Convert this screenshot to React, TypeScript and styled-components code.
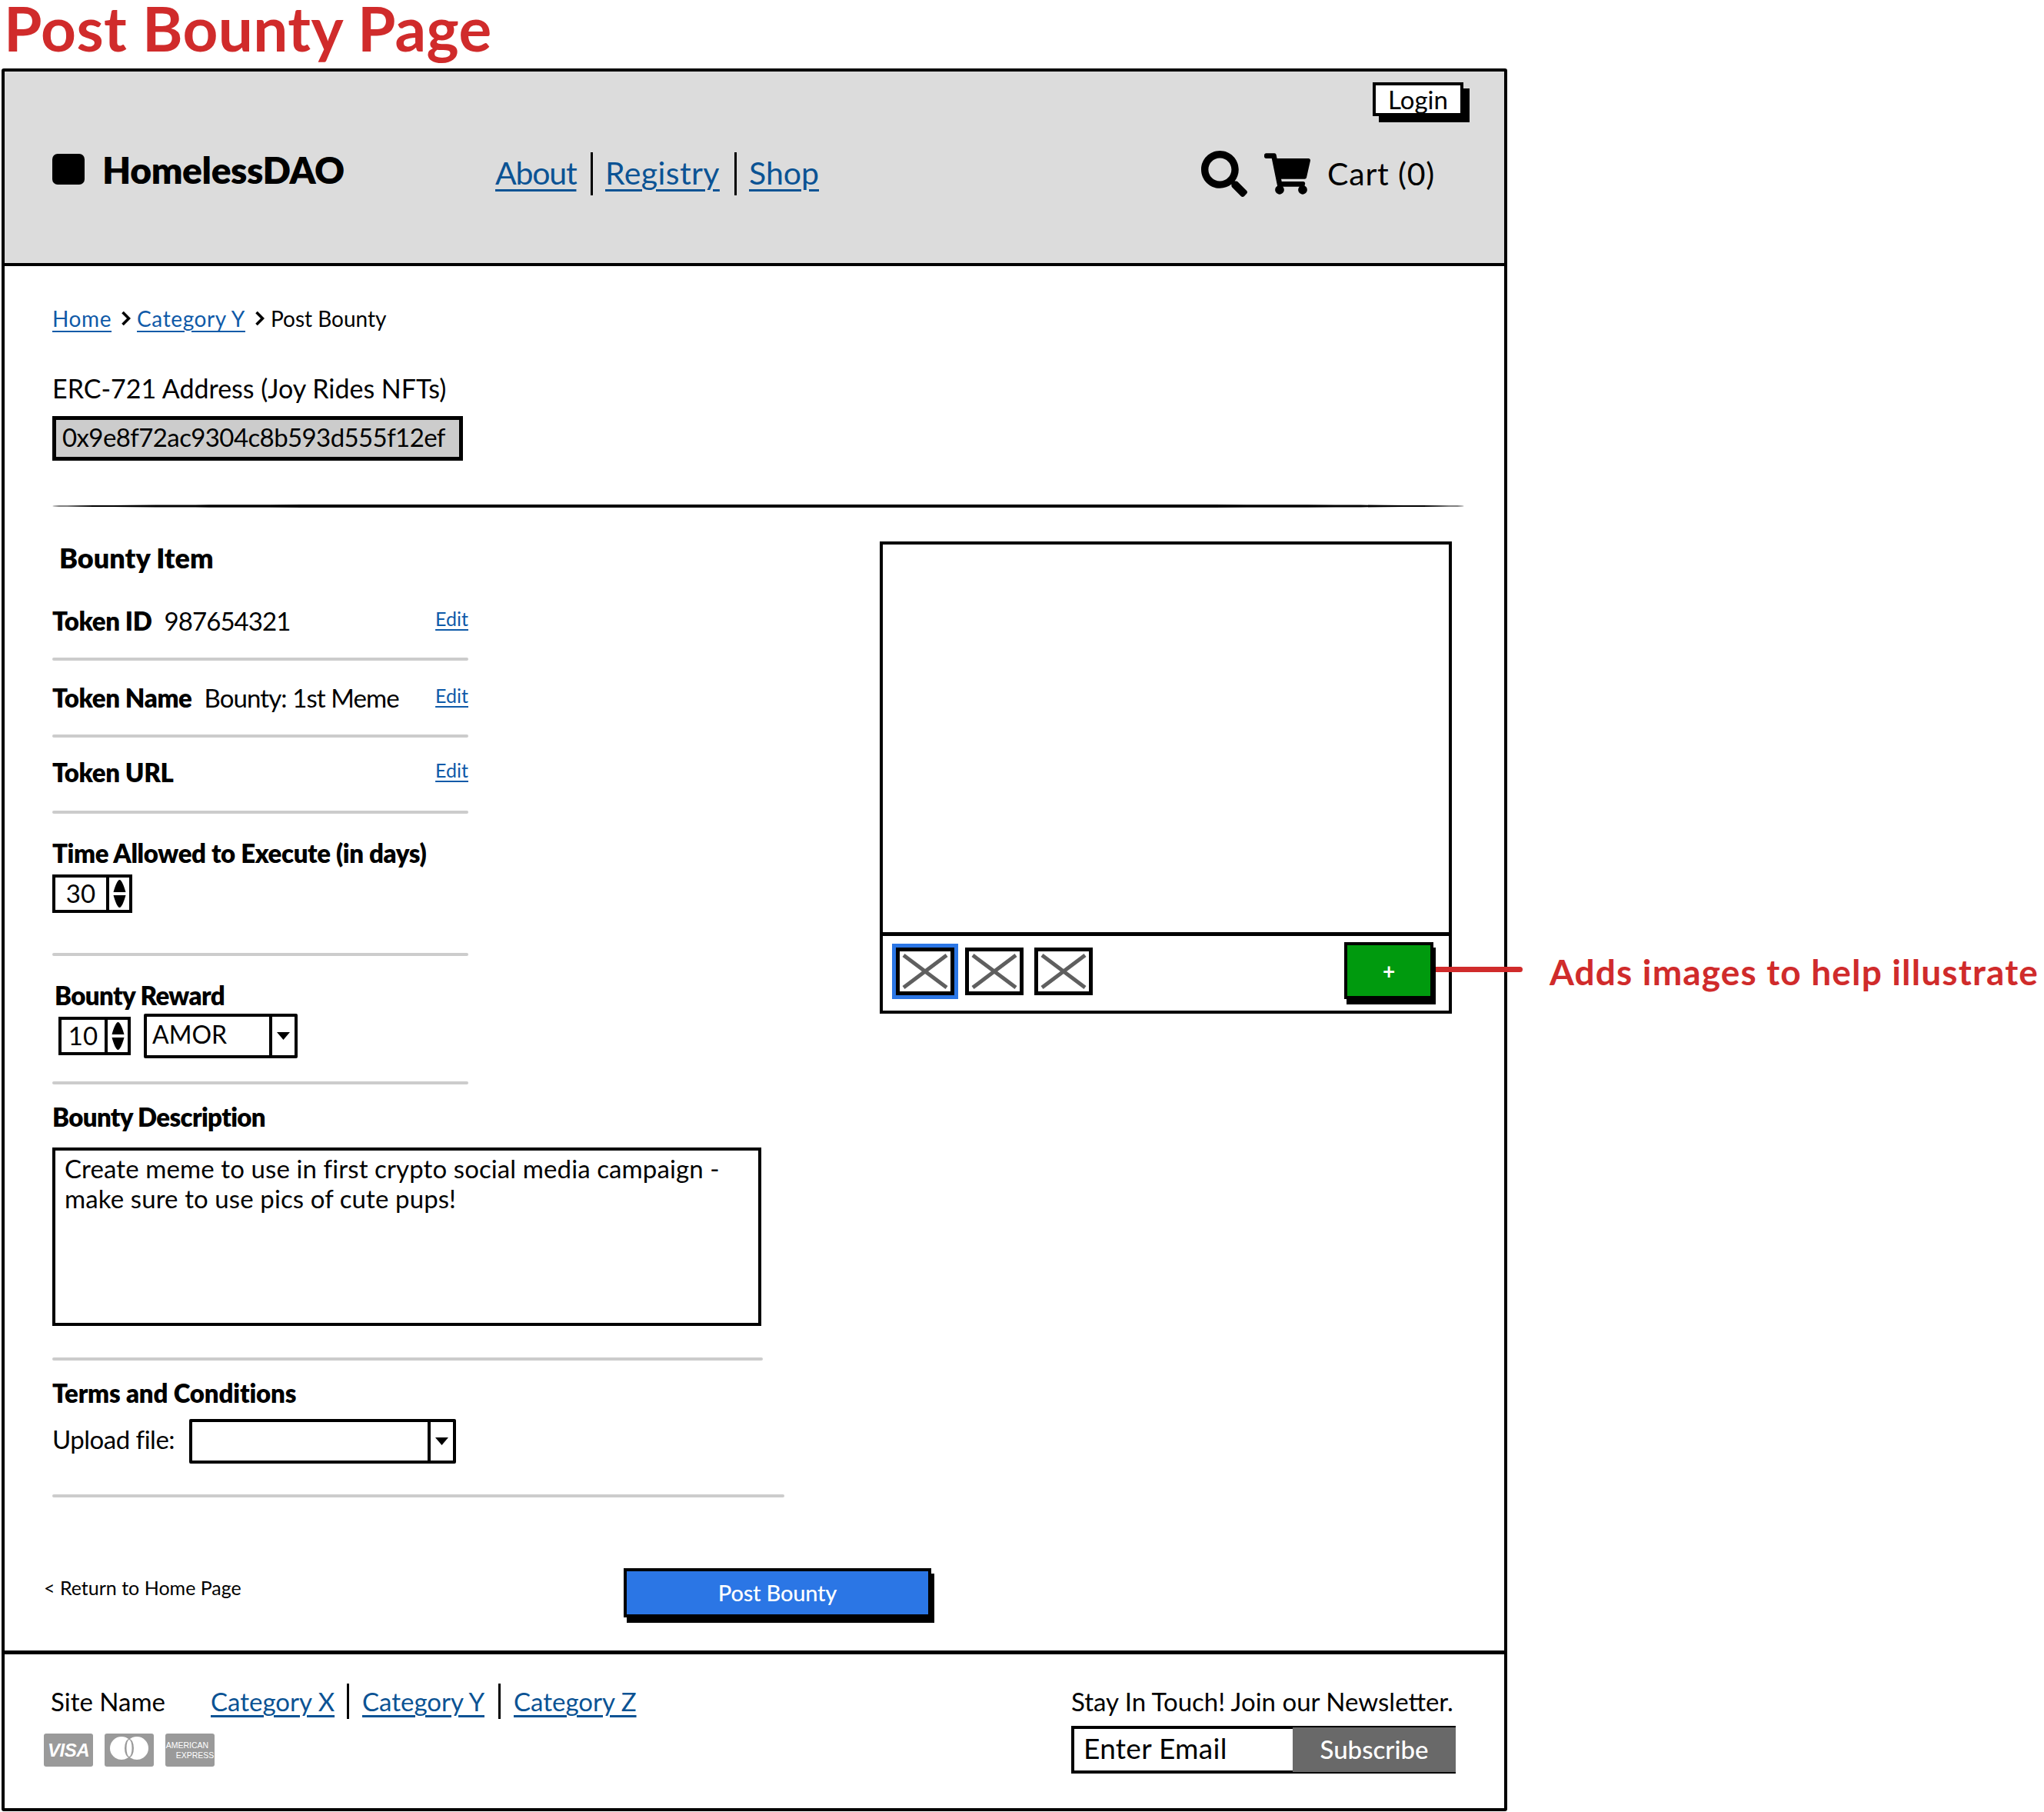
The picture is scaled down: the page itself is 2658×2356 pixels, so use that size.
import styled, { createGlobalStyle } from "styled-components"
import { FaSearch, FaShoppingCart } from "react-icons/fa"

const GlobalStyle = createGlobalStyle`
    html, body {
        margin: 0;
        padding: 0;
        background: #fff;
    }
    body {
        font-family: Lato, "Open Sans", "Liberation Sans", sans-serif;
        color: #000;
    }
    * {
        box-sizing: border-box;
    }
`

function Chevron() {
    return (
        <ChevronIcon viewBox="0 0 12 20">
            <path d="M2 2 L10 10 L2 18" fill="none" stroke="#000" strokeWidth="3.6" />
        </ChevronIcon>
    )
}

function Spinner({ value, wide }: { value: string; wide?: boolean }) {
    return (
        <SpinnerBox $wide={wide}>
            <span>{value}</span>
            <SpinnerArrows>
                <svg viewBox="0 0 17 38" width="17" height="38">
                    <path d="M0.5 17 C3 8 6 1 8.5 1 C11 1 14 8 16.5 17 Z M0.5 21 C3 30 6 37 8.5 37 C11 37 14 30 16.5 21 Z" fill="#000" />
                </svg>
            </SpinnerArrows>
        </SpinnerBox>
    )
}

function Select({ value, width, height }: { value?: string; width: number; height: number }) {
    return (
        <SelectBox $width={width} $height={height}>
            <span>{value}</span>
            <SelectArrow>
                <svg viewBox="0 0 17 10" width="17" height="10">
                    <path d="M0 0 L17 0 L8.5 10 Z" fill="#000" />
                </svg>
            </SelectArrow>
        </SelectBox>
    )
}

function Thumb({ selected }: { selected?: boolean }) {
    return (
        <ThumbBox $selected={selected}>
            <svg viewBox="0 0 66 52" width="100%" height="100%" preserveAspectRatio="none">
                <path d="M5 5 L61 47 M61 5 L5 47" stroke="#5f5f5f" strokeWidth="5" />
            </svg>
        </ThumbBox>
    )
}

function App() {
    return (
        <Page>
            <GlobalStyle />
            <PageTitle>Post Bounty Page</PageTitle>
            <Frame>
                <Header>
                    <LoginRow>
                        <LoginButton>Login</LoginButton>
                    </LoginRow>
                    <NavRow>
                        <Logo>
                            <LogoMark />
                            <span>HomelessDAO</span>
                        </Logo>
                        <Nav>
                            <NavLink $width={106} $spacing={-1.2}>About</NavLink>
                            <Separator />
                            <NavLink $width={150} $spacing={0.4}>Registry</NavLink>
                            <Separator />
                            <NavLink $width={93}>Shop</NavLink>
                        </Nav>
                        <CartArea>
                            <FaSearch size={60} />
                            <FaShoppingCart size={60} />
                            <span>Cart (0)</span>
                        </CartArea>
                    </NavRow>
                </Header>

                <Main>
                    <Breadcrumb>
                        <CrumbLink>Home</CrumbLink>
                        <Chevron />
                        <CrumbLink>Category Y</CrumbLink>
                        <Chevron />
                        <span>Post Bounty</span>
                    </Breadcrumb>
                    <AddressLabel>ERC-721 Address (Joy Rides NFTs)</AddressLabel>
                    <AddressInput>0x9e8f72ac9304c8b593d555f12ef</AddressInput>
                    <BlackRule />

                    <Columns>
                        <FormColumn>
                            <SectionTitle>Bounty Item</SectionTitle>
                            <FieldRow $top={41}>
                                <div>
                                    <b>Token ID</b>
                                    <FieldValue>987654321</FieldValue>
                                </div>
                                <EditLink>Edit</EditLink>
                            </FieldRow>
                            <Divider $top={28} $width={541} />
                            <FieldRow $top={28}>
                                <div>
                                    <b>Token Name</b>
                                    <FieldValue>Bounty: 1st Meme</FieldValue>
                                </div>
                                <EditLink>Edit</EditLink>
                            </FieldRow>
                            <Divider $top={28} $width={541} />
                            <FieldRow $top={25}>
                                <b>Token URL</b>
                                <EditLink>Edit</EditLink>
                            </FieldRow>
                            <Divider $top={30} $width={541} />

                            <FieldLabel $top={31} $spacing={-0.36}>Time Allowed to Execute (in days)</FieldLabel>
                            <TimeControl>
                                <Spinner value="30" wide />
                            </TimeControl>
                            <Divider $top={52} $width={541} />

                            <FieldLabel $top={31} $indent={3} $spacing={-0.6}>Bounty Reward</FieldLabel>
                            <RewardControls>
                                <Spinner value="10" />
                                <Select value="AMOR" width={200} height={58} />
                            </RewardControls>
                            <Divider $top={30} $width={541} />

                            <FieldLabel $top={22} $spacing={-0.65}>Bounty Description</FieldLabel>
                            <DescriptionBox>
                                Create meme to use in first crypto social media campaign -<br />
                                make sure to use pics of cute pups!
                            </DescriptionBox>
                            <Divider $top={41} $width={924} />

                            <FieldLabel $top={22} $spacing={-0.17}>Terms and Conditions</FieldLabel>
                            <UploadRow>
                                <span>Upload file:</span>
                                <Select width={347} height={58} />
                            </UploadRow>
                            <Divider $top={40} $width={952} />
                        </FormColumn>

                        <ImagePanel>
                            <ImageStage />
                            <ThumbStrip>
                                <Thumb selected />
                                <Thumb />
                                <Thumb />
                                <AddButton>+</AddButton>
                            </ThumbStrip>
                        </ImagePanel>
                    </Columns>

                    <BottomBar>
                        <ReturnLink>&lt; Return to Home Page</ReturnLink>
                        <PostButton>Post Bounty</PostButton>
                    </BottomBar>
                </Main>

                <Footer>
                    <FooterLeft>
                        <FooterLinks>
                            <SiteName>Site Name</SiteName>
                            <FooterLink>Category X</FooterLink>
                            <FooterSeparator />
                            <FooterLink>Category Y</FooterLink>
                            <FooterSeparator />
                            <FooterLink>Category Z</FooterLink>
                        </FooterLinks>
                        <Cards>
                            <Card><VisaText>VISA</VisaText></Card>
                            <Card>
                                <svg viewBox="0 0 64 43" width="64" height="43">
                                    <circle cx="22" cy="19" r="15" fill="#fff" />
                                    <circle cx="42" cy="19" r="15" fill="#fff" />
                                    <ellipse cx="32" cy="19" rx="6" ry="12" fill="#9a9a9a" />
                                    <ellipse cx="32" cy="19" rx="3.5" ry="11" fill="#fff" />
                                </svg>
                            </Card>
                            <Card><AmexText>AMERICAN<br /><i>EXPRESS</i></AmexText></Card>
                        </Cards>
                    </FooterLeft>
                    <Newsletter>
                        <NewsletterTitle>Stay In Touch! Join our Newsletter.</NewsletterTitle>
                        <NewsletterForm>
                            <EmailField>Enter Email</EmailField>
                            <SubscribeButton>Subscribe</SubscribeButton>
                        </NewsletterForm>
                    </Newsletter>
                </Footer>
            </Frame>

            <CalloutLine />
            <CalloutText>Adds images to help illustrate</CalloutText>
        </Page>
    )
}

export default App

//#region Styles
const Page = styled.div`
    position: relative;
    width: 2658px;
    height: 2356px;
    overflow: hidden;
`
const PageTitle = styled.h1`
    margin: 0;
    height: 89px;
    padding-left: 5px;
    font-size: 80px;
    line-height: 72px;
    font-weight: 700;
    letter-spacing: .4px;
    color: #d02b2b;
`
const Frame = styled.div`
    display: flex;
    flex-direction: column;
    width: 1958px;
    height: 2266px;
    margin-left: 2px;
    border: 4px solid #000;
    border-radius: 3px;
`

// header
const Header = styled.header`
    display: flex;
    flex-direction: column;
    height: 253px;
    background: #dcdcdc;
    border-bottom: 4px solid #000;
`
const LoginRow = styled.div`
    display: flex;
    justify-content: flex-end;
    padding: 14px 53px 0 0;
`
const LoginButton = styled.span`
    width: 118px;
    height: 44px;
    border: 4px solid #000;
    background: #fff;
    box-shadow: 8px 8px 0 #000;
    font-size: 33px;
    line-height: 36px;
    text-align: center;
`
const NavRow = styled.div`
    display: flex;
    align-items: center;
    height: 60px;
    margin-top: 45px;
    padding-left: 62px;
`
const Logo = styled.div`
    display: flex;
    align-items: center;
    gap: 23px;
    width: 576px;
    margin-bottom: 12px;
    font-size: 48px;
    font-weight: 800;
    letter-spacing: -.4px;
`
const LogoMark = styled.span`
    width: 42px;
    height: 40px;
    background: #000;
    border-radius: 7px;
`
const Nav = styled.nav`
    display: flex;
    align-items: center;
    flex: 1;
`
const NavLink = styled.a<{ $width: number; $spacing?: number }>`
    width: ${props => props.$width}px;
    margin-bottom: 3px;
    font-size: 41px;
    line-height: 48px;
    letter-spacing: ${props => props.$spacing || 0}px;
    color: #0b5394;
    text-decoration: underline;
    text-decoration-thickness: 3px;
    text-underline-offset: 6px;
    white-space: nowrap;
`
const Separator = styled.span`
    width: 3px;
    height: 56px;
    margin: 0 16px 0 18px;
    background: #000;
`
const CartArea = styled.div`
    display: flex;
    align-items: center;
    gap: 22px;
    padding-right: 90px;
    font-size: 41px;
    line-height: 46px;
    letter-spacing: .8px;
`

// main
const Main = styled.main`
    flex: 1;
    padding: 49px 0 0 62px;
`
const Breadcrumb = styled.div`
    display: flex;
    align-items: center;
    height: 40px;
    padding-bottom: 3px;
    font-size: 28px;
`
const CrumbLink = styled.a`
    letter-spacing: .6px;
    color: #0f5aa8;
    text-decoration: underline;
    text-underline-offset: 5px;
`
const ChevronIcon = styled.svg`
    width: 13px;
    height: 20px;
    margin: 0 8px 0 12px;
`
const AddressLabel = styled.div`
    height: 40px;
    margin-top: 51px;
    font-size: 34px;
    line-height: 37px;
`
const AddressInput = styled.div`
    width: 534px;
    height: 58px;
    margin-top: 15px;
    padding-left: 8px;
    background: #cccccc;
    border: 5px solid #000;
    font-size: 33px;
    line-height: 44px;
    letter-spacing: -.6px;
    white-space: nowrap;
`
const BlackRule = styled.hr`
    width: 1836px;
    height: 4px;
    margin: 57px 0 0;
    border: 0;
    background: #000;
    border-radius: 50% / 100%;
`
const Columns = styled.div`
    display: flex;
    align-items: flex-start;
    margin-top: 44px;
`
const FormColumn = styled.div`
    width: 1076px;
`
const SectionTitle = styled.h2`
    margin: 0;
    height: 42px;
    padding-left: 9px;
    font-size: 36px;
    line-height: 42px;
    font-weight: 800;
`
const FieldRow = styled.div<{ $top: number }>`
    display: flex;
    justify-content: space-between;
    align-items: center;
    width: 541px;
    height: 40px;
    margin-top: ${props => props.$top}px;
    font-size: 33px;
    b {
        font-weight: 800;
        letter-spacing: -.4px;
    }
`
const FieldValue = styled.span`
    margin-left: 16px;
    letter-spacing: -.9px;
`
const EditLink = styled.a`
    margin-bottom: 6px;
    font-size: 25px;
    color: #0f5aa8;
    text-decoration: underline;
    text-underline-offset: 4px;
`
const Divider = styled.div<{ $top: number; $width: number }>`
    width: ${props => props.$width}px;
    height: 4px;
    margin-top: ${props => props.$top}px;
    background: #cccccc;
    border-radius: 2px;
`
const FieldLabel = styled.div<{ $top: number; $indent?: number; $spacing?: number }>`
    height: 40px;
    margin-top: ${props => props.$top}px;
    padding-left: ${props => props.$indent || 0}px;
    font-size: 33px;
    line-height: 40px;
    font-weight: 800;
    letter-spacing: ${props => props.$spacing || 0}px;
`
const TimeControl = styled.div`
    margin-top: 8px;
`
const SpinnerBox = styled.div<{ $wide?: boolean }>`
    display: flex;
    width: ${props => props.$wide ? 104 : 94}px;
    height: 50px;
    border: 4px solid #000;
    font-size: 33px;
    span {
        flex: 1;
        line-height: 40px;
        text-align: center;
    }
`
const SpinnerArrows = styled.div`
    display: flex;
    align-items: center;
    justify-content: center;
    width: 30px;
    border-left: 4px solid #000;
`
const RewardControls = styled.div`
    display: flex;
    align-items: center;
    gap: 17px;
    margin-top: 4px;
    padding-left: 8px;
`
const SelectBox = styled.div<{ $width: number; $height: number }>`
    display: flex;
    width: ${props => props.$width}px;
    height: ${props => props.$height}px;
    border: 4px solid #000;
    border-radius: 2px;
    font-size: 32px;
    span {
        flex: 1;
        padding-left: 7px;
        line-height: 46px;
    }
`
const SelectArrow = styled.div`
    display: flex;
    align-items: center;
    justify-content: center;
    width: 33px;
    border-left: 4px solid #000;
`
const DescriptionBox = styled.div`
    width: 922px;
    height: 232px;
    margin-top: 20px;
    padding: 4px 0 0 12px;
    border: 4px solid #000;
    font-size: 33px;
    line-height: 39px;
    letter-spacing: .1px;
`
const UploadRow = styled.div`
    display: flex;
    align-items: center;
    gap: 19px;
    margin-top: 14px;
    font-size: 33px;
    > span {
        margin-bottom: 6px;
        letter-spacing: -.5px;
    }
`

// image panel
const ImagePanel = styled.section`
    width: 744px;
`
const ImageStage = styled.div`
    height: 508px;
    border: 4px solid #000;
    border-bottom: 0;
`
const ThumbStrip = styled.div`
    display: flex;
    align-items: center;
    gap: 14px;
    height: 106px;
    padding-left: 17px;
    border: 4px solid #000;
    border-top-width: 5px;
`
const ThumbBox = styled.div<{ $selected?: boolean }>`
    width: 76px;
    height: 62px;
    margin-bottom: 6px;
    border: 5px solid #000;
    background: #fff;
    box-shadow: ${props => props.$selected ? '0 0 0 5px #2b76e5' : 'none'};
`
const AddButton = styled.div`
    display: flex;
    align-items: center;
    justify-content: center;
    width: 116px;
    height: 74px;
    margin: 0 20px 8px auto;
    background: #009a0e;
    border: 4px solid #000;
    box-shadow: 3px 7px 0 #000;
    font-size: 28px;
    font-weight: 700;
    color: #fff;
`

// bottom bar
const BottomBar = styled.div`
    display: grid;
    grid-template-columns: 754px auto;
    justify-content: start;
    margin: 92px 0 0 -11px;
`
const ReturnLink = styled.a`
    padding-top: 8px;
    font-size: 25px;
    line-height: 34px;
`
const PostButton = styled.div`
    width: 400px;
    height: 64px;
    background: #2b76e5;
    border: 4px solid #000;
    box-shadow: 4px 7px 0 #000;
    font-size: 29px;
    line-height: 56px;
    font-weight: 500;
    letter-spacing: -.2px;
    text-align: center;
    color: #fff;
`

// footer
const Footer = styled.footer`
    display: flex;
    justify-content: space-between;
    height: 205px;
    padding: 37px 63px 0 60px;
    border-top: 5px solid #000;
`
const FooterLeft = styled.div`
    display: flex;
    flex-direction: column;
`
const FooterLinks = styled.div`
    display: flex;
    align-items: center;
    height: 48px;
    font-size: 33px;
`
const SiteName = styled.span`
    width: 208px;
`
const FooterLink = styled.a`
    width: 160px;
    color: #0b5394;
    text-decoration: underline;
    text-decoration-thickness: 3px;
    text-underline-offset: 5px;
    white-space: nowrap;
`
const FooterSeparator = styled.span`
    width: 3px;
    height: 46px;
    margin: 0 17px;
    background: #000;
`
const Cards = styled.div`
    display: flex;
    gap: 15px;
    margin: 18px 0 0 -9px;
`
const Card = styled.div`
    display: flex;
    align-items: center;
    justify-content: center;
    width: 64px;
    height: 43px;
    background: #9a9a9a;
    border-radius: 3px;
    overflow: hidden;
    color: #fff;
    font-family: "Liberation Sans", sans-serif;
`
const VisaText = styled.span`
    font-size: 24px;
    font-weight: 700;
    font-style: italic;
    letter-spacing: -.5px;
`
const AmexText = styled.span`
    font-size: 10.5px;
    line-height: 13px;
    text-align: left;
    white-space: nowrap;
    i {
        display: block;
        padding-left: 13px;
        font-style: normal;
    }
`
const Newsletter = styled.div`
    display: flex;
    flex-direction: column;
`
const NewsletterTitle = styled.div`
    height: 48px;
    font-size: 33px;
    line-height: 48px;
`
const NewsletterForm = styled.div`
    display: flex;
    width: 500px;
    height: 62px;
    margin-top: 8px;
    border: 4px solid #000;
    border-right: 0;
`
const EmailField = styled.div`
    flex: 1;
    padding-left: 12px;
    font-size: 37px;
    line-height: 50px;
    letter-spacing: .3px;
`
const SubscribeButton = styled.div`
    width: 212px;
    margin: -2px 0;
    background: #696969;
    font-size: 33px;
    line-height: 56px;
    font-weight: 500;
    text-align: center;
    color: #fff;
`

// callout, lies over the frame edge
const CalloutLine = styled.div`
    position: absolute;
    left: 1867px;
    top: 1257px;
    width: 113px;
    height: 7px;
    background: #d02b2b;
    border-radius: 0 4px 4px 0;
`
const CalloutText = styled.div`
    position: absolute;
    left: 2015px;
    top: 1236px;
    font-size: 46px;
    line-height: 56px;
    font-weight: 700;
    letter-spacing: 1.15px;
    color: #d02b2b;
    white-space: nowrap;
`
//#endregion
